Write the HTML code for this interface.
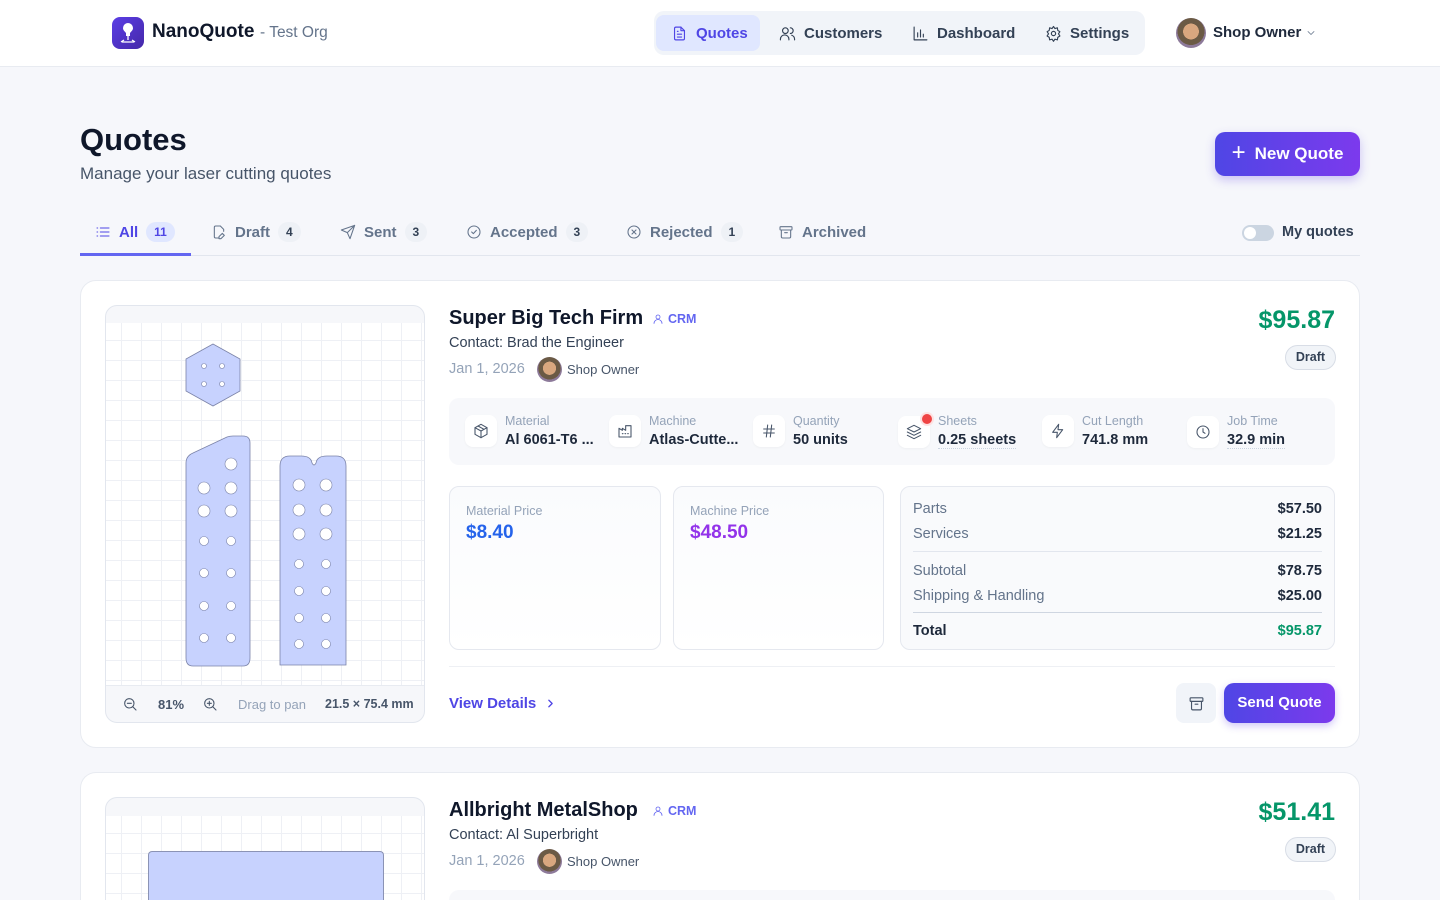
<!DOCTYPE html>
<html><head><meta charset="utf-8"><style>
*{box-sizing:border-box;margin:0;padding:0}
html{width:1440px;height:900px;overflow:hidden}
body{width:1440px;height:900px;overflow:hidden;background:#f6f7fb;font-family:"Liberation Sans",Arial,sans-serif;color:#0f172a;position:relative}
.a{position:absolute}
svg{display:block}
.ic{fill:none;stroke:currentColor;stroke-width:1.6;stroke-linecap:round;stroke-linejoin:round}
.hdr{left:0;top:0;width:1440px;height:67px;background:#fff;border-bottom:1px solid #e8ebf1}
.nav{left:654px;top:11px;width:491px;height:44px;background:#f1f4f9;border-radius:10px}
.navi{top:15px;height:36px;display:flex;align-items:center;gap:8px;font-size:15px;color:#334155;font-weight:600}
.tab{top:222px;height:20px;display:flex;align-items:center;gap:8px;font-size:15px;color:#64748b;font-weight:600}
.cnt{background:#eef1f6;border-radius:10px;font-size:12px;color:#334155;padding:3px 8px;font-weight:700}
.card{background:#fff;border:1px solid #e8ebf1;border-radius:16px}
.grid{background-color:#fff;background-image:linear-gradient(#eef0f5 1px,transparent 1px),linear-gradient(90deg,#eef0f5 1px,transparent 1px);background-size:20px 20px;background-position:-5px -3px}
.st .bx{width:32px;height:32px;background:#fff;border-radius:8px;display:flex;align-items:center;justify-content:center;color:#475569;box-shadow:0 1px 2px rgba(0,0,0,.04)}
.st{top:414px;display:flex;gap:8px;align-items:center}
.lbl{font-size:12.5px;color:#94a3b8}
.val{font-size:14.5px;color:#1e293b;font-weight:600;margin-top:4px}
.row{display:flex;justify-content:space-between;font-size:14.5px;color:#64748b}
.row b{color:#1e293b;font-weight:600}
.av{border-radius:50%;background:radial-gradient(circle at 50% 45%,#d9a77f 0 35%,#6b5a45 36% 60%,#8d7a9a 61%)}
</style></head><body>
<div class="a hdr"></div>
<div class="a" style="left:112px;top:17px;width:32px;height:32px;border-radius:8px;background:linear-gradient(135deg,#5b3ee6,#4528a8)">
<svg width="32" height="32" viewBox="0 0 32 32"><path d="M16 6a5 5 0 0 0-5 5c0 2.5 2 3.5 3 5v3h4v-3c1-1.5 3-2.5 3-5a5 5 0 0 0-5-5z" fill="#fff"/><path d="M16 19v4M10 25h12M12 23l-3 2M20 23l3 2" stroke="#fff" stroke-width="1.3"/></svg></div>
<div class="a" style="left:152px;top:21px;font-size:19px;font-weight:700;color:#0f172a">NanoQuote</div>
<div class="a" style="left:260px;top:24px;font-size:15.5px;color:#64748b">- Test Org</div>
<div class="a nav"></div>
<div class="a" style="left:656px;top:15px;width:104px;height:36px;background:#e0e7ff;border-radius:8px"></div>
<div class="a navi" style="left:671px;color:#4f46e5"><svg class="ic" width="17" height="17" viewBox="0 0 24 24"><path d="M14 3H7a2 2 0 0 0-2 2v14a2 2 0 0 0 2 2h10a2 2 0 0 0 2-2V8z"/><path d="M14 3v5h5M9 13h6M9 17h6M9 9h1"/></svg>Quotes</div>
<div class="a navi" style="left:779px"><svg class="ic" width="17" height="17" viewBox="0 0 24 24"><circle cx="9" cy="8" r="4"/><path d="M2 21v-1a6 6 0 0 1 12 0v1M16 4a4 4 0 0 1 0 8M22 21v-1a6 6 0 0 0-4-5.5"/></svg>Customers</div>
<div class="a navi" style="left:912px"><svg class="ic" width="17" height="17" viewBox="0 0 24 24"><path d="M3 3v18h18M8 17V11M12 17V7M16 17v-4"/></svg>Dashboard</div>
<div class="a navi" style="left:1045px"><svg class="ic" width="17" height="17" viewBox="0 0 24 24"><circle cx="12" cy="12" r="3"/><path d="M12 2l2 3 3.5-1 .5 3.5 3 2-2 3 2 3-3 2-.5 3.5-3.5-1-2 3-2-3-3.5 1-.5-3.5-3-2 2-3-2-3 3-2 .5-3.5L10 5z"/></svg>Settings</div>
<div class="a av" style="left:1176px;top:18px;width:30px;height:30px"></div>
<div class="a" style="left:1213px;top:24px;font-size:15px;font-weight:600;color:#1e293b">Shop Owner</div>
<svg class="a ic" style="left:1305px;top:27px;color:#64748b" width="12" height="12" viewBox="0 0 24 24"><path d="M6 9l6 6 6-6"/></svg>

<div class="a" style="left:80px;top:122px;font-size:31px;font-weight:700;color:#0f172a">Quotes</div>
<div class="a" style="left:80px;top:164px;font-size:17px;color:#475569">Manage your laser cutting quotes</div>
<div class="a" style="left:1215px;top:132px;width:145px;height:44px;border-radius:10px;background:linear-gradient(90deg,#4f46e5,#7c3aed);box-shadow:0 4px 10px rgba(99,70,229,.3);color:#fff;font-size:17px;font-weight:600;display:flex;align-items:center;justify-content:center;gap:9px"><span style="font-size:24px;font-weight:300;margin-top:-3px">+</span>New Quote</div>

<div class="a" style="left:80px;top:255px;width:1280px;height:1px;background:#e2e6ee"></div>
<div class="a" style="left:80px;top:253px;width:111px;height:3px;background:#6366f1"></div>
<div class="a tab" style="left:95px;color:#4f46e5"><svg class="ic" width="16" height="16" viewBox="0 0 24 24"><path d="M8 6h13M8 12h13M8 18h13M3 6h1M3 12h1M3 18h1"/></svg>All <span class="cnt" style="background:#e0e7ff;color:#4f46e5">11</span></div>
<div class="a tab" style="left:211px"><svg class="ic" width="16" height="16" viewBox="0 0 24 24"><path d="M14 3H7a2 2 0 0 0-2 2v14a2 2 0 0 0 2 2h4M14 3l5 5v3M17 14l3 3-5 5h-3v-3z"/></svg>Draft <span class="cnt">4</span></div>
<div class="a tab" style="left:340px"><svg class="ic" width="16" height="16" viewBox="0 0 24 24"><path d="M22 2L11 13M22 2l-7 20-4-9-9-4z"/></svg>Sent <span class="cnt">3</span></div>
<div class="a tab" style="left:466px"><svg class="ic" width="16" height="16" viewBox="0 0 24 24"><circle cx="12" cy="12" r="9"/><path d="M8.5 12l2.5 2.5 4.5-5"/></svg>Accepted <span class="cnt">3</span></div>
<div class="a tab" style="left:626px"><svg class="ic" width="16" height="16" viewBox="0 0 24 24"><circle cx="12" cy="12" r="9"/><path d="M9 9l6 6M15 9l-6 6"/></svg>Rejected <span class="cnt">1</span></div>
<div class="a tab" style="left:778px"><svg class="ic" width="16" height="16" viewBox="0 0 24 24"><rect x="3" y="4" width="18" height="5" rx="1"/><path d="M5 9v10a2 2 0 0 0 2 2h10a2 2 0 0 0 2-2V9M10 13h4"/></svg>Archived</div>
<div class="a" style="left:1242px;top:225px;width:32px;height:16px;border-radius:8px;background:#cbd5e1"><div style="position:absolute;left:2px;top:2px;width:12px;height:12px;border-radius:50%;background:#fff"></div></div>
<div class="a" style="left:1282px;top:224px;font-size:14.5px;color:#334155;font-weight:600">My quotes</div>

<!-- card 1 -->
<div class="a card" style="left:80px;top:280px;width:1280px;height:468px"></div>
<div class="a" style="left:105px;top:305px;width:320px;height:418px;border:1px solid #e2e6ee;border-radius:12px;overflow:hidden;background:#f6f7fa">
 <div class="a grid" style="left:0;top:17px;width:318px;height:362px"></div>
 <svg class="a" style="left:0;top:0" width="320" height="418" viewBox="105 305 320 418">
  <g fill="#c7d2fe" stroke="#7b83a8" stroke-width="0.8">
   <path d="M212 343 L239 358 L239 390 L212 405 L185 390 L185 358 Z"/>
   <path d="M185 462 Q185 455 192 452 L226 436 Q229 435 232 435 L242 435 Q249 435 249 442 L249 657 Q249 665 242 665 L192 665 Q185 665 185 657 Z"/>
   <path d="M279 664 L279 465 Q279 455 289 455 L300 455 Q310 455 311 462 Q313 466 315 462 Q316 455 326 455 L335 455 Q345 455 345 465 L345 664 Z"/>
  </g>
  <g fill="#fff" stroke="#7b83a8" stroke-width="0.6">
   <circle cx="203" cy="365" r="2.5"/><circle cx="221" cy="365" r="2.5"/><circle cx="203" cy="383" r="2.5"/><circle cx="221" cy="383" r="2.5"/>
   <circle cx="230" cy="463" r="6"/><circle cx="203" cy="487" r="6"/><circle cx="230" cy="487" r="6"/><circle cx="203" cy="510" r="6"/><circle cx="230" cy="510" r="6"/>
   <circle cx="203" cy="540" r="4.5"/><circle cx="230" cy="540" r="4.5"/><circle cx="203" cy="572" r="4.5"/><circle cx="230" cy="572" r="4.5"/><circle cx="203" cy="605" r="4.5"/><circle cx="230" cy="605" r="4.5"/><circle cx="203" cy="637" r="4.5"/><circle cx="230" cy="637" r="4.5"/>
   <circle cx="298" cy="484" r="6"/><circle cx="325" cy="484" r="6"/><circle cx="298" cy="509" r="6"/><circle cx="325" cy="509" r="6"/><circle cx="298" cy="533" r="6"/><circle cx="325" cy="533" r="6"/>
   <circle cx="298" cy="563" r="4.5"/><circle cx="325" cy="563" r="4.5"/><circle cx="298" cy="590" r="4.5"/><circle cx="325" cy="590" r="4.5"/><circle cx="298" cy="617" r="4.5"/><circle cx="325" cy="617" r="4.5"/><circle cx="298" cy="643" r="4.5"/><circle cx="325" cy="643" r="4.5"/>
  </g>
 </svg>
 <div class="a" style="left:0;top:379px;width:318px;height:1px;background:#e8ebf1"></div>
 <svg class="a ic" style="left:16px;top:390px;color:#475569" width="16" height="16" viewBox="0 0 24 24"><circle cx="11" cy="11" r="7"/><path d="M21 21l-5-5M8 11h6"/></svg>
 <div class="a" style="left:52px;top:391px;font-size:13px;color:#475569;font-weight:600">81%</div>
 <svg class="a ic" style="left:96px;top:390px;color:#475569" width="16" height="16" viewBox="0 0 24 24"><circle cx="11" cy="11" r="7"/><path d="M21 21l-5-5M8 11h6M11 8v6"/></svg>
 <div class="a" style="left:132px;top:391px;font-size:13px;color:#94a3b8">Drag to pan</div>
 <div class="a" style="left:219px;top:391px;font-size:12.5px;color:#475569;font-weight:600">21.5 × 75.4 mm</div>
</div>

<div class="a" style="left:449px;top:307px;font-size:20px;font-weight:700;color:#0f172a">Super Big Tech Firm</div>
<div class="a" style="left:652px;top:312px;font-size:12.5px;color:#6366f1;font-weight:600;display:flex;gap:4px;align-items:center"><svg class="ic" width="12" height="12" viewBox="0 0 24 24"><circle cx="12" cy="8" r="4"/><path d="M4 21a8 8 0 0 1 16 0"/></svg>CRM</div>
<div class="a" style="left:449px;top:335px;font-size:14.5px;color:#334155">Contact: Brad the Engineer</div>
<div class="a" style="left:449px;top:361px;font-size:14.5px;color:#94a3b8">Jan 1, 2026</div>
<div class="a av" style="left:537px;top:357px;width:25px;height:25px"></div>
<div class="a" style="left:567px;top:362px;font-size:13px;color:#475569">Shop Owner</div>
<div class="a" style="left:1200px;top:306px;width:135px;text-align:right;font-size:25px;font-weight:700;color:#059669">$95.87</div>
<div class="a" style="left:1285px;top:345px;width:51px;height:25px;border:1px solid #d8dde6;border-radius:13px;background:#f1f4f8;font-size:12.5px;font-weight:700;color:#334155;text-align:center;line-height:23px">Draft</div>

<div class="a" style="left:449px;top:398px;width:886px;height:67px;background:#f7f8fb;border-radius:10px"></div>
<div class="a st" style="left:465px"><div class="bx"><svg class="ic" width="16" height="16" viewBox="0 0 24 24"><path d="M12 2l9 5v10l-9 5-9-5V7z"/><path d="M3 7l9 5 9-5M12 12v10M7.5 4.5l9 5"/></svg></div><div><div class="lbl">Material</div><div class="val">Al 6061-T6 ...</div></div></div>
<div class="a st" style="left:609px"><div class="bx"><svg class="ic" width="16" height="16" viewBox="0 0 24 24"><path d="M3 21V8l5 3V8l5 3V4h8v17z"/><path d="M8 16h1M12 16h1M16 16h1"/></svg></div><div><div class="lbl">Machine</div><div class="val">Atlas-Cutte...</div></div></div>
<div class="a st" style="left:753px"><div class="bx"><svg class="ic" width="16" height="16" viewBox="0 0 24 24"><path d="M4 9h16M4 15h16M10 3L8 21M16 3l-2 18"/></svg></div><div><div class="lbl">Quantity</div><div class="val">50 units</div></div></div>
<div class="a st" style="left:898px"><div class="bx"><svg class="ic" width="16" height="16" viewBox="0 0 24 24"><path d="M12 2l10 5-10 5L2 7z"/><path d="M2 12l10 5 10-5M2 17l10 5 10-5"/></svg></div><div><div class="lbl">Sheets</div><div class="val" style="border-bottom:1px dotted #cbd5e1">0.25 sheets</div></div></div>
<div class="a" style="left:922px;top:414px;width:10px;height:10px;border-radius:50%;background:#ef4444;box-shadow:0 0 0 2px #fde2e2"></div>
<div class="a st" style="left:1042px"><div class="bx"><svg class="ic" width="16" height="16" viewBox="0 0 24 24"><path d="M13 2L4 14h7l-1 8 9-12h-7z"/></svg></div><div><div class="lbl">Cut Length</div><div class="val">741.8 mm</div></div></div>
<div class="a st" style="left:1187px"><div class="bx"><svg class="ic" width="16" height="16" viewBox="0 0 24 24"><circle cx="12" cy="12" r="9"/><path d="M12 7v5l3 2"/></svg></div><div><div class="lbl">Job Time</div><div class="val" style="border-bottom:1px dotted #cbd5e1">32.9 min</div></div></div>

<div class="a" style="left:449px;top:486px;width:212px;height:164px;border:1px solid #e5e8ef;border-radius:10px;background:linear-gradient(#fafbfd,#fff)"><div class="a lbl" style="left:16px;top:17px;font-size:12.5px">Material Price</div><div class="a" style="left:16px;top:35px;font-size:19px;font-weight:700;color:#2563eb">$8.40</div></div>
<div class="a" style="left:673px;top:486px;width:211px;height:164px;border:1px solid #e5e8ef;border-radius:10px;background:linear-gradient(#fafbfd,#fff)"><div class="a lbl" style="left:16px;top:17px;font-size:12.5px">Machine Price</div><div class="a" style="left:16px;top:35px;font-size:19px;font-weight:700;color:#9333ea">$48.50</div></div>
<div class="a" style="left:900px;top:486px;width:435px;height:164px;border:1px solid #e5e8ef;border-radius:10px;background:#f9fafc;padding:14px 12px 0 12px">
 <div class="row"><span>Parts</span><b>$57.50</b></div>
 <div class="row" style="margin-top:9px"><span>Services</span><b>$21.25</b></div>
 <div style="height:1px;background:#e2e6ee;margin:9px 0 11px"></div>
 <div class="row"><span>Subtotal</span><b>$78.75</b></div>
 <div class="row" style="margin-top:9px"><span>Shipping &amp; Handling</span><b>$25.00</b></div>
 <div style="height:1px;background:#cfd6e1;margin:8px 0 10px"></div>
 <div class="row"><b style="font-weight:700">Total</b><b style="color:#059669;font-weight:700">$95.87</b></div>
</div>
<div class="a" style="left:449px;top:666px;width:886px;height:1px;background:#eef0f4"></div>
<div class="a" style="left:449px;top:695px;font-size:15px;font-weight:600;color:#4f46e5;display:flex;align-items:center;gap:8px">View Details <svg class="ic" width="13" height="13" viewBox="0 0 24 24" style="stroke-width:2.4"><path d="M9 6l6 6-6 6"/></svg></div>
<div class="a" style="left:1176px;top:683px;width:40px;height:40px;border-radius:8px;background:#f1f4f9;display:flex;align-items:center;justify-content:center;color:#475569"><svg class="ic" width="17" height="17" viewBox="0 0 24 24"><rect x="3" y="4" width="18" height="5" rx="1"/><path d="M5 9v10a2 2 0 0 0 2 2h10a2 2 0 0 0 2-2V9M10 13h4"/></svg></div>
<div class="a" style="left:1224px;top:683px;width:111px;height:40px;border-radius:10px;background:linear-gradient(90deg,#4f46e5,#7c3aed);box-shadow:0 3px 8px rgba(99,70,229,.3);color:#fff;font-size:15px;font-weight:600;text-align:center;line-height:40px">Send Quote</div>

<!-- card 2 (clipped at viewport bottom) -->
<div class="a" style="left:80px;top:772px;width:1280px;height:128px;background:#fff;border:1px solid #e8ebf1;border-bottom:none;border-radius:16px 16px 0 0"></div>
<div class="a" style="left:105px;top:797px;width:320px;height:103px;border:1px solid #e2e6ee;border-bottom:none;border-radius:12px 12px 0 0;overflow:hidden;background:#f6f7fa">
 <div class="a grid" style="left:0;top:18px;width:318px;height:85px"></div>
 <div class="a" style="left:42px;top:53px;width:236px;height:50px;background:#c7d2fe;border:1px solid #8b93b5;border-bottom:none;border-radius:4px 4px 0 0"></div>
</div>
<div class="a" style="left:449px;top:799px;font-size:20px;font-weight:700;color:#0f172a">Allbright MetalShop</div>
<div class="a" style="left:652px;top:804px;font-size:12.5px;color:#6366f1;font-weight:600;display:flex;gap:4px;align-items:center"><svg class="ic" width="12" height="12" viewBox="0 0 24 24"><circle cx="12" cy="8" r="4"/><path d="M4 21a8 8 0 0 1 16 0"/></svg>CRM</div>
<div class="a" style="left:449px;top:827px;font-size:14.5px;color:#334155">Contact: Al Superbright</div>
<div class="a" style="left:449px;top:853px;font-size:14.5px;color:#94a3b8">Jan 1, 2026</div>
<div class="a av" style="left:537px;top:849px;width:25px;height:25px"></div>
<div class="a" style="left:567px;top:854px;font-size:13px;color:#475569">Shop Owner</div>
<div class="a" style="left:1200px;top:798px;width:135px;text-align:right;font-size:25px;font-weight:700;color:#059669">$51.41</div>
<div class="a" style="left:1285px;top:837px;width:51px;height:25px;border:1px solid #d8dde6;border-radius:13px;background:#f1f4f8;font-size:12.5px;font-weight:700;color:#334155;text-align:center;line-height:23px">Draft</div>
<div class="a" style="left:449px;top:890px;width:886px;height:10px;background:#f7f8fb;border-radius:10px 10px 0 0"></div>
</body></html>
